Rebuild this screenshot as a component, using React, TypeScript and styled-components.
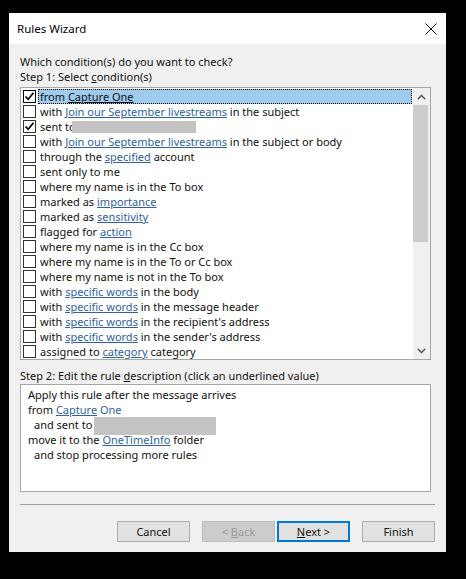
import React from "react";
import styled, { createGlobalStyle } from "styled-components";

const Global = createGlobalStyle`
  html, body { margin: 0; padding: 0; background: #000; }
  body { font-family: "Noto Sans", "Segoe UI", sans-serif; }
`;

const Screen = styled.div`
  width: 466px;
  height: 579px;
  background: #000;
  padding: 13px 20px 0 9px;
  box-sizing: border-box;
`;

const Dialog = styled.div`
  width: 437px;
  height: 539px;
  background: #f0f0f0;
  display: flex;
  flex-direction: column;
  font-size: 11px;
  line-height: 15px;
  color: #000;
`;

const TitleBar = styled.div`
  height: 31px;
  flex: none;
  background: #fff;
  display: flex;
  align-items: center;
  justify-content: space-between;
  padding: 0 9px 0 8px;
  font-size: 11.5px;
`;

const Body = styled.div`
  flex: 1;
  display: flex;
  flex-direction: column;
  padding: 10px 15px 0 11px;
`;

const Label = styled.div<{ $mt?: number }>`
  height: 15px;
  margin-top: ${(p) => p.$mt ?? 0}px;
  color: #111;
  white-space: nowrap;
`;

const Mn = styled.span`
  text-decoration: underline;
`;

const ListBox = styled.div`
  margin-top: 3px;
  height: 273px;
  box-sizing: border-box;
  border: 1px solid #a6a6a6;
  background: #fff;
  display: flex;
`;

const Rows = styled.div`
  flex: 1;
  padding: 1px 1px 0 2px;
  display: flex;
  flex-direction: column;
  overflow: hidden;
`;

const Row = styled.div`
  height: 15px;
  display: flex;
  align-items: center;
  flex: none;
`;

const Box = styled.span<{ $focus?: boolean }>`
  width: 13px;
  height: 13px;
  box-sizing: border-box;
  border: 1px solid ${(p) => (p.$focus ? "#000" : "#333")};
  background: #fff;
  flex: none;
  display: flex;
  align-items: center;
  justify-content: center;
`;

const RowText = styled.span<{ $sel?: boolean }>`
  flex: 1;
  height: 15px;
  box-sizing: border-box;
  margin-left: 2px;
  padding: 0 2px;
  white-space: nowrap;
  color: #111;
  background: ${(p) => (p.$sel ? "#9fcbef" : "transparent")};
  outline: ${(p) => (p.$sel ? "1px dotted #000" : "none")};
  outline-offset: -1px;
  line-height: 15px;
`;

const Link = styled.span<{ $plain?: boolean; $sel?: boolean }>`
  color: ${(p) => (p.$sel ? "#111" : "#2f62a3")};
  text-decoration: ${(p) => (p.$plain ? "none" : "underline")};
`;

const Redact = styled.span<{ $w: number; $h: number; $ml: number; $va: number }>`
  display: inline-block;
  width: ${(p) => p.$w}px;
  height: ${(p) => p.$h}px;
  margin-left: ${(p) => p.$ml}px;
  vertical-align: ${(p) => p.$va}px;
  background: #c3c3c3;
`;

const ScrollBar = styled.div`
  width: 17px;
  flex: none;
  background: #f0f0f0;
  display: flex;
  flex-direction: column;
`;

const ArrowCell = styled.div`
  height: 17px;
  flex: none;
  display: flex;
  align-items: center;
  justify-content: center;
`;

const Track = styled.div`
  flex: 1;
`;

const Thumb = styled.div`
  width: 15px;
  height: 137px;
  background: #cdcdcd;
`;

const DescBox = styled.div`
  margin-top: 1px;
  height: 108px;
  box-sizing: border-box;
  border: 1px solid #a6a6a6;
  background: #fff;
  padding: 2px 7px;
`;

const DescLine = styled.div<{ $indent?: boolean }>`
  height: 15px;
  white-space: nowrap;
  padding-left: ${(p) => (p.$indent ? 6 : 0)}px;
  color: #111;
`;

const Separator = styled.div`
  margin-top: 12px;
  margin-right: -4px;
  height: 1px;
  background: #a0a0a0;
`;

const ButtonRow = styled.div`
  margin-top: 16px;
  margin-right: -4px;
  display: flex;
  justify-content: flex-end;
`;

const Button = styled.button<{ $variant?: "default" | "disabled" | "primary"; $ml: number }>`
  width: 73px;
  height: 21px;
  box-sizing: border-box;
  margin-left: ${(p) => p.$ml}px;
  font-family: inherit;
  font-size: 11px;
  padding: 0;
  line-height: 15px;
  cursor: default;
  background: ${(p) => (p.$variant === "disabled" ? "#cccccc" : "#e1e1e1")};
  color: ${(p) => (p.$variant === "disabled" ? "#9a9a9a" : "#111")};
  border: ${(p) =>
    p.$variant === "primary"
      ? "2px solid #0078d7"
      : p.$variant === "disabled"
      ? "1px solid #bfbfbf"
      : "1px solid #adadad"};
`;

type Part = string | { link: string; plain?: boolean } | { redact: true };

type Cond = { parts: Part[]; checked?: boolean; selected?: boolean };

const conditions: Cond[] = [
  { parts: ["from ", { link: "Capture One" }], checked: true, selected: true },
  { parts: ["with ", { link: "Join our September livestreams" }, " in the subject"] },
  { parts: ["sent to", { redact: true }], checked: true },
  { parts: ["with ", { link: "Join our September livestreams" }, " in the subject or body"] },
  { parts: ["through the ", { link: "specified" }, " account"] },
  { parts: ["sent only to me"] },
  { parts: ["where my name is in the To box"] },
  { parts: ["marked as ", { link: "importance" }] },
  { parts: ["marked as ", { link: "sensitivity" }] },
  { parts: ["flagged for ", { link: "action" }] },
  { parts: ["where my name is in the Cc box"] },
  { parts: ["where my name is in the To or Cc box"] },
  { parts: ["where my name is not in the To box"] },
  { parts: ["with ", { link: "specific words" }, " in the body"] },
  { parts: ["with ", { link: "specific words" }, " in the message header"] },
  { parts: ["with ", { link: "specific words" }, " in the recipient's address"] },
  { parts: ["with ", { link: "specific words" }, " in the sender's address"] },
  { parts: ["assigned to ", { link: "category" }, " category"] },
];

const Check = () => (
  <svg width="11" height="11" viewBox="0 0 11 11">
    <path d="M1.5 5.5 L4.2 8.3 L9.5 1.8" fill="none" stroke="#000" strokeWidth="1.7" />
  </svg>
);

const Chevron = ({ up }: { up?: boolean }) => (
  <svg width="9" height="6" viewBox="0 0 9 6">
    <path
      d={up ? "M0.8 5.2 L4.5 1.5 L8.2 5.2" : "M0.8 0.8 L4.5 4.5 L8.2 0.8"}
      fill="none"
      stroke="#606060"
      strokeWidth="1.6"
    />
  </svg>
);

const CloseIcon = () => (
  <svg width="12" height="12" viewBox="0 0 12 12">
    <path d="M0.5 0.5 L11.5 11.5 M11.5 0.5 L0.5 11.5" stroke="#111" strokeWidth="1" />
  </svg>
);

export default function App() {
  return (
    <Screen>
      <Global />
      <Dialog>
        <TitleBar>
          <span>Rules Wizard</span>
          <CloseIcon />
        </TitleBar>
        <Body>
          <Label>Which condition(s) do you want to check?</Label>
          <Label>
            Step 1: Select <Mn>c</Mn>ondition(s)
          </Label>
          <ListBox>
            <Rows>
              {conditions.map((c, i) => (
                <Row key={i}>
                  <Box $focus={c.selected}>{c.checked && <Check />}</Box>
                  <RowText $sel={c.selected}>
                    {c.parts.map((p, j) =>
                      typeof p === "string" ? (
                        <React.Fragment key={j}>{p}</React.Fragment>
                      ) : "link" in p ? (
                        <Link key={j} $sel={c.selected}>
                          {p.link}
                        </Link>
                      ) : (
                        <Redact key={j} $w={124} $h={12} $ml={-4} $va={-2} />
                      )
                    )}
                  </RowText>
                </Row>
              ))}
            </Rows>
            <ScrollBar>
              <ArrowCell>
                <Chevron up />
              </ArrowCell>
              <Track>
                <Thumb />
              </Track>
              <ArrowCell>
                <Chevron />
              </ArrowCell>
            </ScrollBar>
          </ListBox>
          <Label $mt={8}>
            Step 2: Edit the rule <Mn>d</Mn>escription (click an underlined value)
          </Label>
          <DescBox>
            <DescLine>Apply this rule after the message arrives</DescLine>
            <DescLine>
              from <Link>Capture</Link> <Link $plain>One</Link>
            </DescLine>
            <DescLine $indent>
              and sent to
              <Redact $w={122} $h={18} $ml={2} $va={-6} />
            </DescLine>
            <DescLine>
              move it to the <Link>OneTimeInfo</Link> folder
            </DescLine>
            <DescLine $indent>and stop processing more rules</DescLine>
          </DescBox>
          <Separator />
          <ButtonRow>
            <Button $ml={0}>Cancel</Button>
            <Button $ml={12} $variant="disabled">
              &lt; <Mn>B</Mn>ack
            </Button>
            <Button $ml={2} $variant="primary">
              <Mn>N</Mn>ext &gt;
            </Button>
            <Button $ml={12}>Finish</Button>
          </ButtonRow>
        </Body>
      </Dialog>
    </Screen>
  );
}
